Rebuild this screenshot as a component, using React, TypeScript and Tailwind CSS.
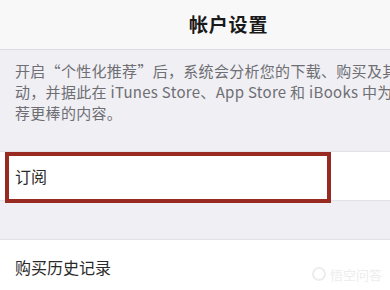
import React from 'react';

const font = { fontFamily: '"Noto Sans CJK SC", "Noto Sans", sans-serif' };

export default function App() {
  return (
    <div
      className="relative w-[390px] h-[290px] overflow-hidden bg-[#efeff4]"
      style={font}
    >
      <div className="h-[50px] bg-[#f8f8f8] border-b border-[#dedee2] flex items-center pl-[189px]">
        <span className="text-[19px] font-bold text-[#1a1a1a] tracking-[0.8px]">帐户设置</span>
      </div>

      <div className="pt-[10px] pl-[15px] text-[15px] leading-[21px] text-[#6e6e73] whitespace-nowrap tracking-[0.3px]">
        <div>开启“个性化推荐”后，系统会分析您的下载、购买及其</div>
        <div>动，并据此在 iTunes Store、App Store 和 iBooks 中为</div>
        <div>荐更棒的内容。</div>
      </div>

      <div className="mt-[28px] h-[50px] bg-white border-y border-[#e2e2e6] flex items-center pl-[15px]">
        <span className="text-[16px] text-[#2a2a2a]">订阅</span>
      </div>

      <div className="mt-[38px] h-[60px] bg-white border-t border-[#e2e2e6] flex items-start pt-[15px] pl-[15px]">
        <span className="text-[16px] text-[#2a2a2a]">购买历史记录</span>
      </div>

      {/* annotation box */}
      <div className="absolute left-[5px] top-[152px] w-[326px] h-[51px] border-[4px] border-[#982a22]" />

      {/* watermark */}
      <div className="absolute right-[8px] bottom-[6px] flex items-center gap-1 text-[13px] text-[#ededed]">
        <span className="inline-block w-[14px] h-[14px] rounded-full border-2 border-[#ededed]" />
        <span>悟空问答</span>
      </div>
    </div>
  );
}
